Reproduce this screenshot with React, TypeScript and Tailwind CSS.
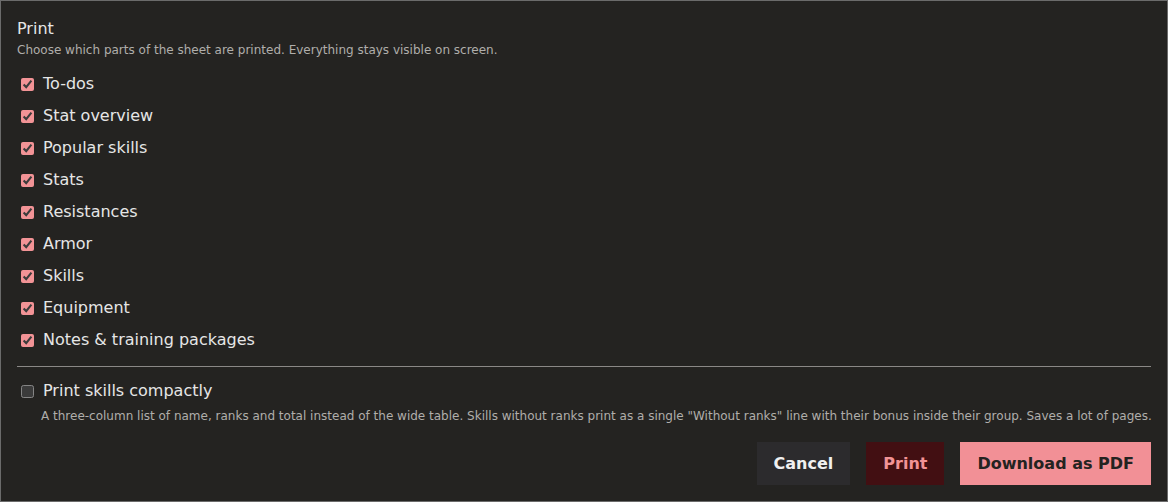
import React from "react";

const items = [
  "To-dos",
  "Stat overview",
  "Popular skills",
  "Stats",
  "Resistances",
  "Armor",
  "Skills",
  "Equipment",
  "Notes & training packages",
];

export default function App() {
  return (
    <div
      className="w-[1168px] h-[502px] bg-[#242321] border border-[#6b6b6b] px-4 pt-4 pb-4 text-[#e8e6e3] flex flex-col [color-scheme:dark]"
      style={{ fontFamily: '"DejaVu Sans", sans-serif' }}
    >
      <div className="text-[16px] leading-6 text-[#e6e6e6]">Print</div>
      <div className="text-[12px] leading-4 mt-[1px] text-[#b0aeab]">
        Choose which parts of the sheet are printed. Everything stays visible on screen.
      </div>
      <div className="flex flex-col gap-2 mt-[14px]">
        {items.map((it) => (
          <label key={it} className="flex items-center h-6 gap-[6px] text-[16px] text-[#e6e6e6]">
            <input type="checkbox" defaultChecked className="accent-[#f29396] m-0 ml-1 mr-[3px] w-[13px] h-[13px]" />
            <span>{it}</span>
          </label>
        ))}
      </div>
      <div className="h-px bg-[#8a8886] mt-[14px]" />
      <label className="flex items-center h-6 gap-[6px] text-[16px] text-[#e6e6e6] mt-[12px]">
        <input type="checkbox" className="accent-[#f29396] m-0 ml-1 mr-[3px] w-[13px] h-[13px]" />
        <span>Print skills compactly</span>
      </label>
      <div className="pl-6 -mr-4 whitespace-nowrap text-[12px] leading-4 mt-[5px] text-[#b0aeab]">
        A three-column list of name, ranks and total instead of the wide table. Skills without ranks print as a single "Without ranks" line with their bonus inside their group. Saves a lot of pages.
      </div>
      <div className="flex justify-end gap-4 mt-auto">
        <button className="h-[43px] px-[17px] bg-[#2c2b2d] text-[#f0f0f0] font-bold text-[16px]">Cancel</button>
        <button className="h-[43px] px-[17px] bg-[#420f12] text-[#f29396] font-bold text-[16px]">Print</button>
        <button className="h-[43px] px-[17px] bg-[#f29096] text-[#242321] font-bold text-[16px]">Download as PDF</button>
      </div>
    </div>
  );
}
